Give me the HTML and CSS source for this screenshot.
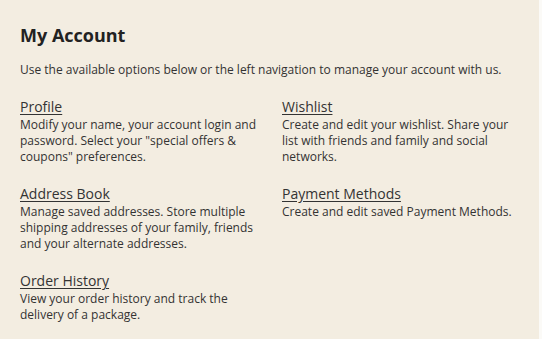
FILE: index.html
```html
<!DOCTYPE html>
<html>
<head>
<meta charset="utf-8">
<link rel="stylesheet" href="styles.css">
</head>
<body>
<div class="panel">
  <h1 class="title">My Account</h1>
  <p class="intro">Use the available options below or the left navigation to manage your account with us.</p>
  <div class="grid">
    <div class="item">
      <a class="link" href="#">Profile</a>
      <p class="desc">Modify your name, your account login and password. Select your "special offers &amp; coupons" preferences.</p>
    </div>
    <div class="item">
      <a class="link" href="#">Wishlist</a>
      <p class="desc">Create and edit your wishlist. Share your list with friends and family and social networks.</p>
    </div>
    <div class="item">
      <a class="link" href="#">Address Book</a>
      <p class="desc">Manage saved addresses. Store multiple shipping addresses of your family, friends and your alternate addresses.</p>
    </div>
    <div class="item">
      <a class="link" href="#">Payment Methods</a>
      <p class="desc">Create and edit saved Payment Methods.</p>
    </div>
    <div class="item">
      <a class="link" href="#">Order History</a>
      <p class="desc">View your order history and track the delivery of a package.</p>
    </div>
  </div>
</div>
</body>
</html>
```

FILE: styles.css
```css
html, body {
  margin: 0;
  padding: 0;
  background: #f3ede1;
}
body {
  font-family: "Open Sans", "Liberation Sans", sans-serif;
  color: #2b2b2b;
}
.panel {
  width: 542px;
  height: 339px;
  box-sizing: border-box;
  padding: 23px 0 0 20px;
  background: #f3ede1;
  border-right: 3px solid #fbfaf7;
}
.title {
  margin: 0;
  font-size: 18px;
  font-weight: 700;
  line-height: 24px;
  color: #222;
}
.intro {
  margin: 15px 0 0;
  font-size: 12px;
  line-height: 16px;
  color: #333;
}
.grid {
  display: grid;
  grid-template-columns: 262px 245px;
  row-gap: 17px;
  margin-top: 17px;
}
.item {
  width: 245px;
}
.link {
  display: inline-block;
  font-size: 14px;
  line-height: 17px;
  color: #333;
  text-decoration: underline;
  text-underline-offset: 2px;
}
.desc {
  margin: 0;
  font-size: 12px;
  line-height: 16px;
  color: #333;
}
```
